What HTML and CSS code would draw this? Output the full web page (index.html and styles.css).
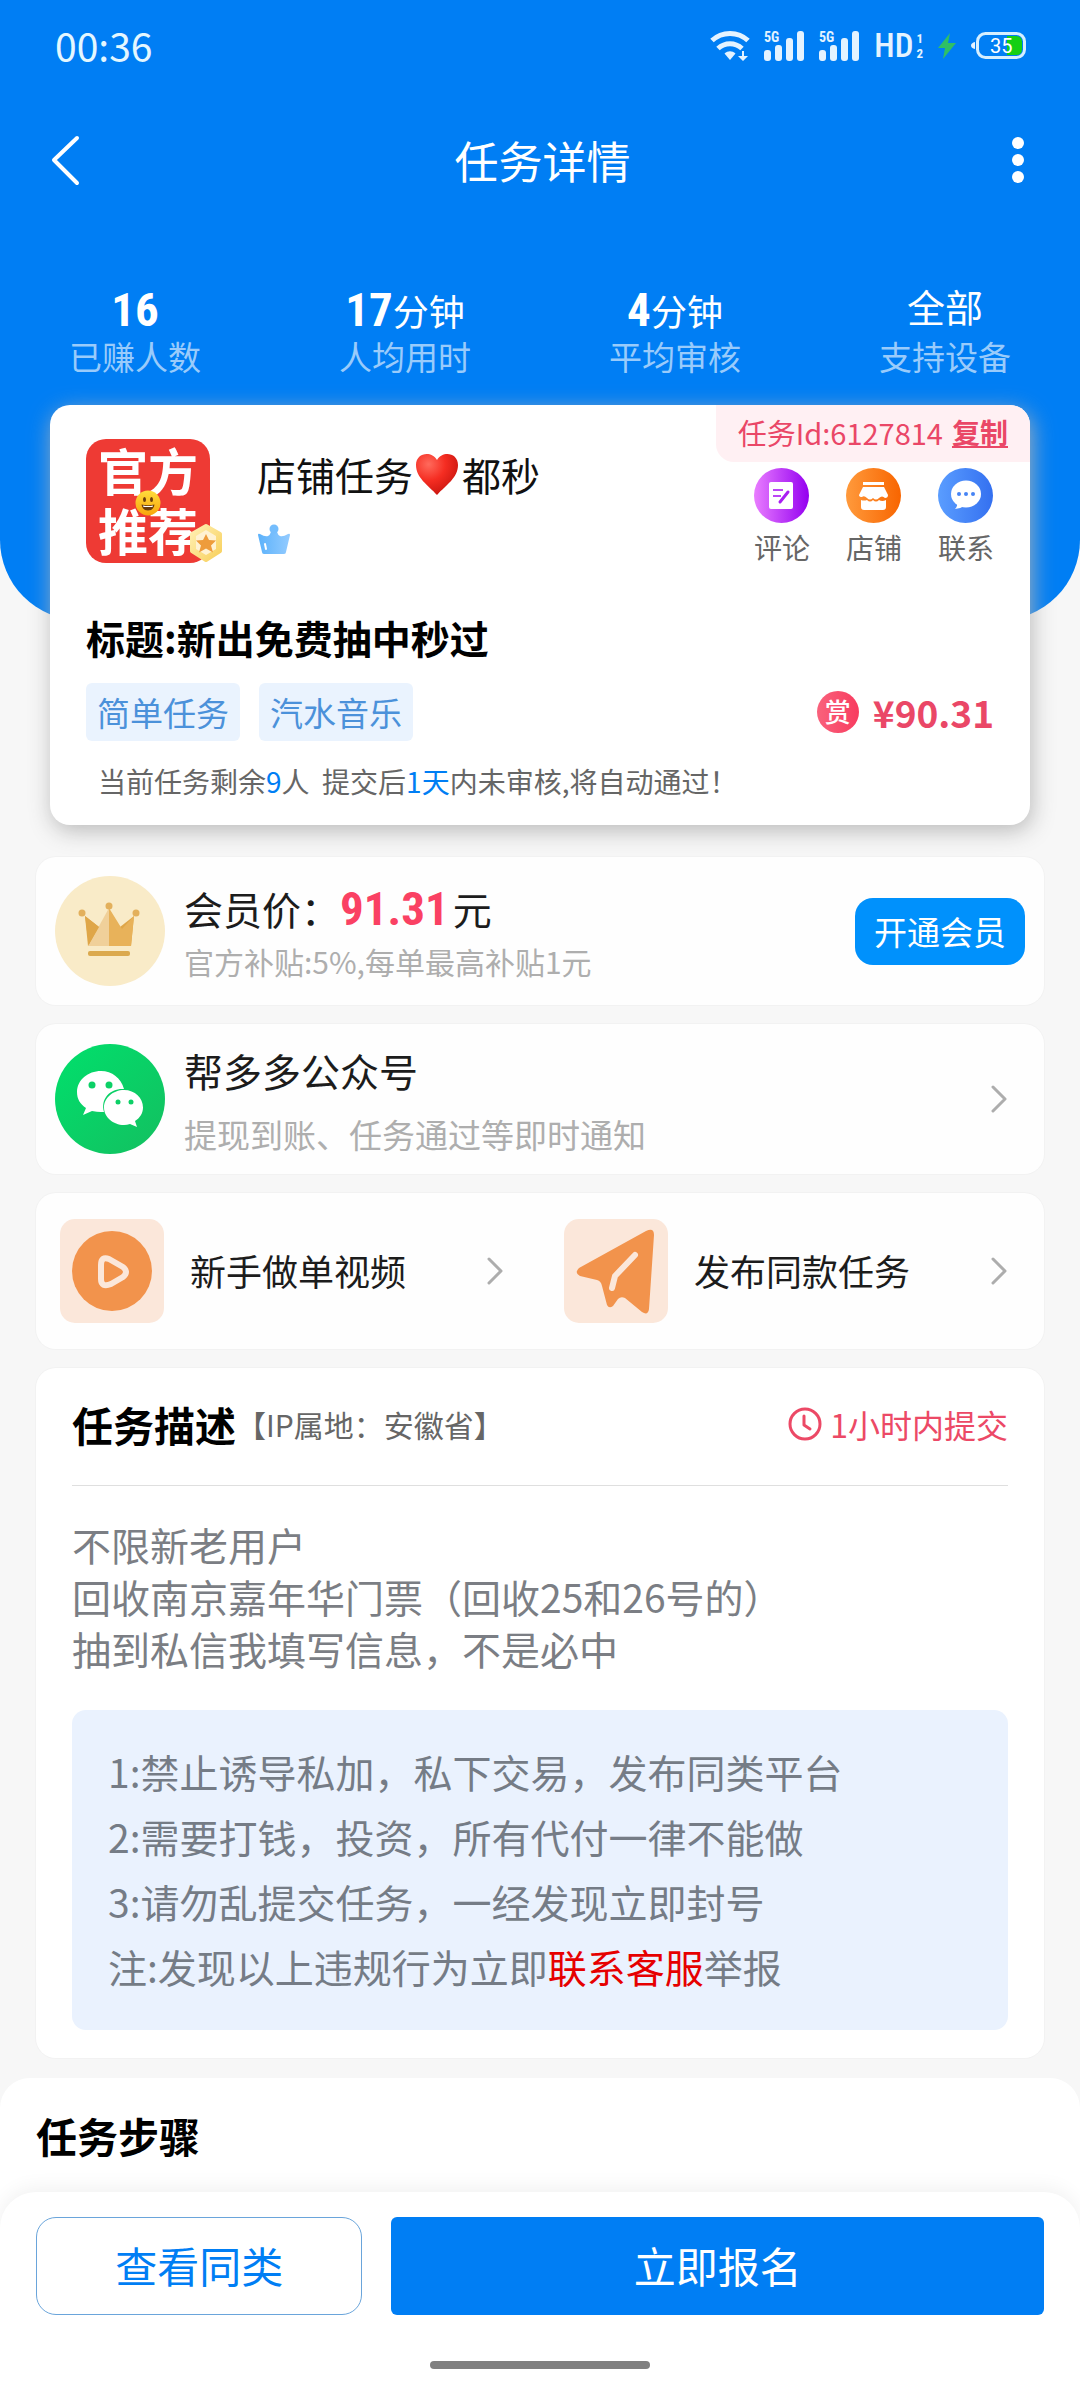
FILE: index.html
```html
<!DOCTYPE html>
<html lang="zh-CN">
<head>
<meta charset="utf-8">
<meta name="viewport" content="width=device-width, initial-scale=1">
<title>任务详情</title>
<link rel="stylesheet" href="styles.css">
</head>
<body>
<header class="hero">
  <div class="status">
    <span class="status-time">00:36</span>
    <div class="status-icons">
      <svg width="40" height="32" viewBox="0 0 40 32" fill="none" stroke="#e4f3ff" stroke-width="5">
        <path d="M2 10.500C12 1 28 1 38 10.500"/><path d="M8 18.500C15 12 25 12 32 18.500"/>
        <path d="M14.500 23.500C18 20.500 22 20.500 25.500 23.500L20 30Z" fill="#e4f3ff" stroke="none"/>
        <path d="M34 21v5h4l-5 5-5-5h4v-5z" fill="#e4f3ff" stroke="none"/>
      </svg>
      <svg class="signal" width="41" height="32" viewBox="0 0 41 32" fill="#e4f3ff">
        <rect x="0" y="20" width="7" height="11" rx="3"/><rect x="11" y="15" width="7" height="16" rx="3"/><rect x="22" y="8" width="7" height="23" rx="3"/><rect x="33" y="1" width="7" height="30" rx="3"/>
        <text x="0" y="12" class="net">5G</text>
      </svg>
      <svg class="signal" width="41" height="32" viewBox="0 0 41 32" fill="#e4f3ff">
        <rect x="0" y="20" width="7" height="11" rx="3"/><rect x="11" y="15" width="7" height="16" rx="3"/><rect x="22" y="8" width="7" height="23" rx="3"/><rect x="33" y="1" width="7" height="30" rx="3"/>
        <text x="0" y="12" class="net">5G</text>
      </svg>
      <div class="hd"><span>HD</span><span class="hd-sims"><span>1</span><span>2</span></span></div>
      <svg class="bolt" width="20" height="28" viewBox="0 0 20 28" fill="#2fc065"><path d="M13 1L1 16h7L6 27 19 11h-8z"/></svg>
      <svg width="56" height="32" viewBox="0 0 56 32">
        <path d="M4 12v7q-4-1-4-3.500T4 12z" fill="#e4f3ff"/>
        <path d="M36 6h9q6 0 6 6v7q0 6-6 6h-9z" fill="#14cf14"/>
        <rect x="6.500" y="3.500" width="47" height="24" rx="8" fill="none" stroke="#d5efff" stroke-width="3"/>
        <text x="19" y="23" class="battery">35</text>
      </svg>
    </div>
  </div>
  <nav class="nav">
    <button class="nav-button" aria-label="返回"><svg width="32" height="52" viewBox="0 0 32 52" fill="none" stroke="#fff" stroke-width="4" stroke-linecap="round" stroke-linejoin="round"><path d="M27 4L4 26l23 23"/></svg></button>
    <h1 class="nav-title">任务详情</h1>
    <button class="nav-button" aria-label="更多"><svg width="12" height="48" viewBox="0 0 12 48" fill="#fff"><circle cx="6" cy="7" r="6"/><circle cx="6" cy="24" r="6"/><circle cx="6" cy="41" r="6"/></svg></button>
  </nav>
  <dl class="stats">
    <div class="stat"><dd><b class="figure">16</b></dd><dt>已赚人数</dt></div>
    <div class="stat"><dd><b class="figure">17</b>分钟</dd><dt>人均用时</dt></div>
    <div class="stat"><dd><b class="figure">4</b>分钟</dd><dt>平均审核</dt></div>
    <div class="stat"><dd class="stat-text">全部</dd><dt>支持设备</dt></div>
  </dl>
</header>

<main class="content">
  <section class="task">
    <div class="task-id"><span>任务Id:6127814</span><a href="#copy">复制</a></div>
    <div class="owner">
      <div class="avatar">
        <span>官方</span><span>推荐</span>
        <svg class="smile" width="26" height="26" viewBox="0 0 26 26"><defs><linearGradient id="face" x2="0" y2="1"><stop stop-color="#ffdc3c"/><stop offset="1" stop-color="#f8a50c"/></linearGradient></defs><circle cx="13" cy="13" r="12.500" fill="url(#face)"/><ellipse cx="9.500" cy="9.500" rx="1.500" ry="2.500" fill="#6b3d0c"/><ellipse cx="16.500" cy="9.500" rx="1.500" ry="2.500" fill="#6b3d0c"/><path d="M6.500 14.500q6.500 1.500 13 0-1 6-6.500 6t-6.500-6z" fill="#6b3d0c"/><path d="M8 15.500q5 1 10 0l-.5 1.500h-9z" fill="#fff"/></svg>
        <svg class="medal" width="36" height="40" viewBox="0 0 36 40"><defs><linearGradient id="gold" x2="1" y2="1"><stop stop-color="#fff0b4"/><stop offset="1" stop-color="#f8d05c"/></linearGradient></defs><path d="M18 3L32 11V28L18 37 4 28V11z" fill="url(#gold)" stroke="url(#gold)" stroke-width="4" stroke-linejoin="round"/><path d="M18 7L28 13V26L18 32 8 26V13z" fill="#fff2d2"/><path d="M18 11l3 6 7 .5-5 5 2 7-7-4-7 4 2-7-5-5 7-.5z" fill="#ee9c3c"/></svg>
      </div>
      <div class="owner-info">
        <p class="owner-name">店铺任务<svg width="49" height="44" viewBox="0 0 49 44" role="img" aria-label="红心"><defs><radialGradient id="heart" cx=".3" cy=".25" r=".8"><stop stop-color="#ff6a5c"/><stop offset=".5" stop-color="#f52d22"/><stop offset="1" stop-color="#c9150f"/></radialGradient></defs><path d="M24 43C15 33 3 26 3 13 3 1 18-2 24 8 30-2 45 1 45 13 45 26 33 33 24 43z" fill="url(#heart)"/></svg>都秒</p>
        <svg class="rank" width="34" height="30" viewBox="0 0 34 30"><defs><linearGradient id="rank" x2="1"><stop stop-color="#5cb2fb"/><stop offset="1" stop-color="#93cbff"/></linearGradient></defs><path d="M1 11q0-2 2-1 5 3 8 2 2-1 3-4h6q1 3 3 4 3 1 8-2 2-1 2 1l-4 17q0 2-2 2H7q-2 0-2-2z" fill="url(#rank)"/><circle cx="17" cy="5" r="4.500" fill="#74bdfd"/><path d="M8 20l1 5" stroke="#fff" stroke-width="2" stroke-linecap="round"/></svg>
      </div>
      <div class="actions">
        <a class="action" href="#comment">
          <svg width="55" height="55" viewBox="0 0 55 55"><defs><linearGradient id="purple" x2="1"><stop stop-color="#e97dff"/><stop offset="1" stop-color="#9400f0"/></linearGradient></defs><circle cx="27.500" cy="27.500" r="27.500" fill="url(#purple)"/><rect x="15" y="14" width="24" height="27" rx="2" fill="#fff"/><path d="M19 22h10M19 28h8" stroke="#bb46f5" stroke-width="2"/><path d="M34 24L26 34" stroke="#a91ef2" stroke-width="3" stroke-linecap="round"/></svg>
          评论</a>
        <a class="action" href="#shop">
          <svg width="55" height="55" viewBox="0 0 55 55"><defs><linearGradient id="orange" x2="1"><stop stop-color="#ff9a3c"/><stop offset="1" stop-color="#f86500"/></linearGradient></defs><circle cx="27.500" cy="27.500" r="27.500" fill="url(#orange)"/><path d="M17 14h21v3H17zM17 19h21l4 8q0 3-3 3-3-3-6 0-3 3-6 0-3 3-6 0-3-3-5-1-3 0-3-2z" fill="#fff"/><path d="M15 32q3 1 6 0 3 3 6 0 3 3 6 0 3 2 7 0v7q0 3-3 3H18q-3 0-3-3z" fill="#fff"/></svg>
          店铺</a>
        <a class="action" href="#contact">
          <svg width="55" height="55" viewBox="0 0 55 55"><defs><linearGradient id="blue" x2="1"><stop stop-color="#5a9dff"/><stop offset="1" stop-color="#3470f0"/></linearGradient></defs><circle cx="27.500" cy="27.500" r="27.500" fill="url(#blue)"/><ellipse cx="28" cy="26" rx="15" ry="13.500" fill="#fff"/><path d="M19 34q1 4-2 7 5 0 9-3z" fill="#fff"/><g fill="#4684f5"><circle cx="21" cy="26" r="2"/><circle cx="28" cy="26" r="2"/><circle cx="35" cy="26" r="2"/></g></svg>
          联系</a>
      </div>
    </div>
    <h2 class="task-title">标题:新出免费抽中秒过</h2>
    <div class="task-meta">
      <span class="tag">简单任务</span><span class="tag">汽水音乐</span>
      <span class="reward"><span class="reward-mark">赏</span>¥90.31</span>
    </div>
    <p class="notice">当前任务剩余<em>9</em>人&nbsp; 提交后<em>1天</em>内未审核,将自动通过！</p>
  </section>

  <div class="cards">
    <section class="card row">
      <svg class="badge" width="110" height="110" viewBox="0 0 110 110"><circle cx="55" cy="55" r="55" fill="#f9ebc8"/><path d="M30 40L44 51 40 62 34 70z" fill="#dfa648"/><path d="M79 40L65 51 70 70 76 70z" fill="#dfa648"/><path d="M54 32L33 70H54z" fill="#f0d09a"/><path d="M54 32L67 53 79 40 76 70H54z" fill="#e8b25a"/><path d="M30 40L33 70 44 51z" fill="#dfa648"/><g fill="#e3b05c"><circle cx="27" cy="37" r="3.500"/><circle cx="54" cy="30" r="3.500"/><circle cx="81" cy="37" r="3.500"/></g><rect x="33" y="75" width="42" height="5" rx="2" fill="#dba94e"/></svg>
      <div class="row-body">
        <p class="row-title">会员价：<b class="figure figure-red">91.31</b>元</p>
        <p class="row-sub row-sub-small">官方补贴:5%,每单最高补贴1元</p>
      </div>
      <button class="vip">开通会员</button>
    </section>

    <a class="card row row-wechat" href="#wechat">
      <svg class="badge" width="110" height="110" viewBox="0 0 110 110"><defs><linearGradient id="wx" x2="1" y2="1"><stop stop-color="#00e06c"/><stop offset="1" stop-color="#14bf60"/></linearGradient></defs><circle cx="55" cy="55" r="55" fill="url(#wx)"/><path d="M46 27C33 27 22 36 22 48c0 7 3 12 9 16l-3 7 9-4q5 1 9 1h3C45 54 56 44 69 45 66 34 57 27 46 27z" fill="#fff"/><path d="M69 46c-11 0-20 8-20 17.500S58 81 69 81q3 0 6-1l7 3-2-6c5-3 8-8 8-13.500C88 54 80 46 69 46z" fill="#fff"/><g fill="#0cd066"><circle cx="37" cy="41" r="3.500"/><circle cx="54" cy="41" r="3.500"/><circle cx="63" cy="58" r="2.500"/><circle cx="76" cy="58" r="2.500"/></g></svg>
      <div class="row-body">
        <p class="row-title">帮多多公众号</p>
        <p class="row-sub">提现到账、任务通过等即时通知</p>
      </div>
      <svg class="chevron" width="16" height="28" viewBox="0 0 16 28"><path d="M2 2l12 12L2 26"/></svg>
    </a>

    <div class="card links">
      <a class="link" href="#video">
        <svg width="104" height="104" viewBox="0 0 104 104"><rect width="104" height="104" rx="15" fill="#fbe7da"/><circle cx="52" cy="52" r="40" fill="#f2934c"/><path d="M41 46q0-9 8-6l14 8q6 5 0 10l-12 7q-10 4-10-5z" fill="none" stroke="#fbe7da" stroke-width="6" stroke-linejoin="round"/></svg>
        <span>新手做单视频</span>
        <svg class="chevron" width="16" height="28" viewBox="0 0 16 28"><path d="M2 2l12 12L2 26"/></svg>
      </a>
      <a class="link" href="#publish">
        <svg width="104" height="104" viewBox="0 0 104 104"><rect width="104" height="104" rx="15" fill="#fbe7da"/><path d="M82 12q8-4 8 4L85 90q-1 7-7 3L61 79q-4-2-7 1l-5 7q-4 3-6-1l-5-19q-1-5-5-6l-17-4q-6-3-1-8z" fill="#f2934c"/><path d="M71 36L51 57 48 69" fill="none" stroke="#fbe7da" stroke-width="6" stroke-linecap="round" stroke-linejoin="round"/></svg>
        <span>发布同款任务</span>
        <svg class="chevron" width="16" height="28" viewBox="0 0 16 28"><path d="M2 2l12 12L2 26"/></svg>
      </a>
    </div>

    <section class="card detail">
      <div class="detail-head">
        <h2 class="section-title">任务描述</h2>
        <span class="region">【IP属地：安徽省】</span>
        <span class="deadline"><svg width="34" height="34" viewBox="0 0 34 34" fill="none" stroke="#ec4966" stroke-width="3" stroke-linecap="round" stroke-linejoin="round"><circle cx="17" cy="17" r="15"/><path d="M16 9v9l6 4"/></svg>1小时内提交</span>
      </div>
      <p class="description">不限新老用户<br>回收南京嘉年华门票（回收25和26号的）<br>抽到私信我填写信息，不是必中</p>
      <div class="rules">
        <p>1:禁止诱导私加，私下交易，发布同类平台</p>
        <p>2:需要打钱，投资，所有代付一律不能做</p>
        <p>3:请勿乱提交任务，一经发现立即封号</p>
        <p>注:发现以上违规行为立即<a href="#service">联系客服</a>举报</p>
      </div>
    </section>
  </div>
</main>

<div class="bottom">
  <section class="steps"><h2 class="section-title">任务步骤</h2></section>
  <footer class="footer">
    <div class="footer-actions">
      <button class="similar">查看同类</button>
      <button class="apply">立即报名</button>
    </div>
    <div class="home-bar"></div>
  </footer>
</div>
</body>
</html>
```
FILE: styles.css
```css
* { box-sizing: border-box; margin: 0; padding: 0; }
body {
  display: flex;
  flex-direction: column;
  min-height: 100vh;
  background: #f7f7f7;
  color: #222;
  font-family: "Noto Sans CJK SC", sans-serif;
}
a { color: inherit; text-decoration: none; }
button { border: 0; background: none; font-family: inherit; cursor: pointer; }
svg { flex: none; }

.hero {
  padding-bottom: 246px;
  border-radius: 0 0 80px 80px;
  background: #007ef4;
  color: #fff;
}
.status {
  display: flex;
  align-items: center;
  justify-content: space-between;
  height: 92px;
  padding: 0 53px 0 55px;
}
.status-time { padding-bottom: 2px; color: #e4f7ff; font-size: 39px; line-height: 44px; }
.status-icons { display: flex; align-items: center; gap: 14px; }
.signal { overflow: visible; }
.net { font: bold 14px "Roboto Condensed", "Roboto", sans-serif; }
.hd {
  display: flex;
  align-items: center;
  gap: 3px;
  color: #e4f3ff;
  font-family: "Roboto Condensed", "Roboto", sans-serif;
  font-size: 33px;
  font-weight: 500;
  line-height: 32px;
}
.hd-sims { display: flex; flex-direction: column; font-size: 13px; font-weight: bold; line-height: 15px; }
.battery { fill: #fff; font: 20px "Roboto", sans-serif; }

.nav {
  display: flex;
  align-items: center;
  justify-content: space-between;
  height: 138px;
  padding: 0 47px 2px 50px;
}
.nav-button { display: flex; justify-content: center; min-width: 30px; }
.nav-title { font-size: 44px; font-weight: 400; line-height: 60px; }

.stats { display: grid; grid-template-columns: repeat(4, 1fr); padding-top: 52px; text-align: center; }
.stat dd { height: 56px; font-size: 36px; line-height: 56px; }
.stat .stat-text { font-size: 38px; line-height: 48px; }
.stat dt { color: #99cbfb; font-size: 33px; line-height: 36px; }
.figure { font-family: "Roboto Condensed", "Roboto", sans-serif; font-size: 47px; font-weight: bold; line-height: 1; }
.figure-red { margin-right: 4px; color: #fa4163; }

.content { margin-top: -215px; }
.task {
  position: relative;
  margin: 0 50px;
  padding: 34px 36px 24px;
  border-radius: 20px;
  background: #fff;
  box-shadow: 2px 6px 22px rgba(180, 180, 180, 0.9);
}
.task-id {
  position: absolute;
  top: 0;
  right: 0;
  display: flex;
  align-items: center;
  gap: 9px;
  height: 57px;
  padding: 0 22px 3px;
  border-radius: 0 20px 0 18px;
  background: #fff0f3;
  color: #ea4767;
  font-size: 29px;
}
.task-id a { font-size: 28px; font-weight: bold; text-decoration: underline; }
.owner { display: flex; align-items: flex-start; }
.avatar {
  position: relative;
  display: flex;
  flex-direction: column;
  align-items: center;
  width: 124px;
  height: 124px;
  border-radius: 20px;
  background: #ee3a34;
  color: #fff;
  font-size: 50px;
  font-weight: bold;
  line-height: 60px;
}
.smile { position: absolute; left: 49px; top: 51px; }
.medal { position: absolute; right: -14px; bottom: 0; }
.owner-info { flex: 1; padding: 9px 0 0 47px; }
.owner-name { display: flex; align-items: center; color: #111; font-size: 39px; line-height: 52px; }
.rank { display: block; margin-top: 24px; }
.actions { display: flex; gap: 36px; padding-top: 29px; }
.action { display: flex; flex-direction: column; gap: 4px; color: #666; font-size: 28px; line-height: 40px; }
.task-title { margin-top: 42px; color: #000; font-size: 39px; line-height: 56px; }
.task-meta { display: flex; align-items: center; gap: 19px; margin-top: 18px; }
.tag { padding: 0 11px; border-radius: 6px; background: #eaf3fe; color: #4b91da; font-size: 33px; line-height: 58px; }
.reward { display: flex; align-items: center; gap: 14px; margin-left: auto; color: #ea4767; font-size: 37px; font-weight: bold; line-height: 56px; }
.reward-mark {
  width: 42px;
  height: 42px;
  border-radius: 50%;
  background: linear-gradient(90deg, #f9627c, #f83b5f);
  color: #fff;
  font-size: 26px;
  font-weight: 500;
  line-height: 40px;
  text-align: center;
}
.notice { margin-top: 20px; padding-left: 12px; color: #666; font-size: 28px; line-height: 40px; }
.notice em { color: #007ef4; font-style: normal; }

.cards { display: flex; flex-direction: column; gap: 19px; padding: 32px 36px 20px; }
.card { border-radius: 20px; background: #fefefe; box-shadow: 0 0 0 1px #f2f2f2; }
.row { display: flex; align-items: center; gap: 19px; padding: 19px; }
.row-wechat { padding: 18px 37px 18px 19px; }
.row-body { flex: 1; }
.row-title { color: #1c1c1c; font-size: 39px; line-height: 60px; }
.row-sub { color: #aeaeae; font-size: 33px; line-height: 44px; }
.row-sub-small { font-size: 30px; line-height: 46px; }
.row-wechat .row-title { margin-bottom: 14px; line-height: 56px; }
.vip { width: 170px; height: 67px; border-radius: 18px; background: #0091fc; color: #fff; font-size: 33px; }
.chevron { fill: none; stroke: #adadad; stroke-width: 3; stroke-linecap: round; stroke-linejoin: round; }
.links { display: grid; grid-template-columns: 1fr 1fr; padding: 26px 0; }
.link { display: flex; align-items: center; gap: 26px; padding: 0 37px 0 24px; color: #1c1c1c; font-size: 36px; }
.link span { flex: 1; padding-bottom: 2px; }
.detail { padding: 0 36px 28px; background: #fff; }
.detail-head { display: flex; align-items: center; height: 118px; padding-bottom: 6px; border-bottom: 1px solid #dfdfdf; }
.section-title { color: #000; font-size: 41px; line-height: 60px; }
.region { color: #666; font-size: 30px; }
.deadline { display: flex; align-items: center; gap: 8px; margin-left: auto; color: #ec4966; font-size: 32px; }
.description { margin-top: 32px; color: #7b7e84; font-size: 39px; line-height: 52px; }
.rules { margin-top: 36px; padding: 29px 36px 31px; border-radius: 14px; background: #eaf2fe; color: #757c86; font-size: 39px; line-height: 65px; }
.rules a { color: #e60000; }

.bottom { flex: 1; display: flex; flex-direction: column; border-radius: 30px 30px 0 0; background: #fff; }
.steps { flex: 1; padding: 27px 36px 20px; }
.footer {
  padding: 25px 36px 31px;
  border-radius: 36px 36px 0 0;
  background: #fff;
  box-shadow: 0 -4px 20px rgba(0, 0, 0, 0.06);
}
.footer-actions { display: grid; grid-template-columns: 1fr 2fr; gap: 29px; }
.footer button { height: 98px; padding-bottom: 3px; font-size: 42px; }
.similar { border: 1px solid #6aa5db; border-radius: 20px; color: #007ef4; }
.apply { border-radius: 6px; background: #007ef4; color: #fff; }
.home-bar { width: 220px; height: 8px; margin: 46px auto 0; border-radius: 4px; background: #808080; }
```
